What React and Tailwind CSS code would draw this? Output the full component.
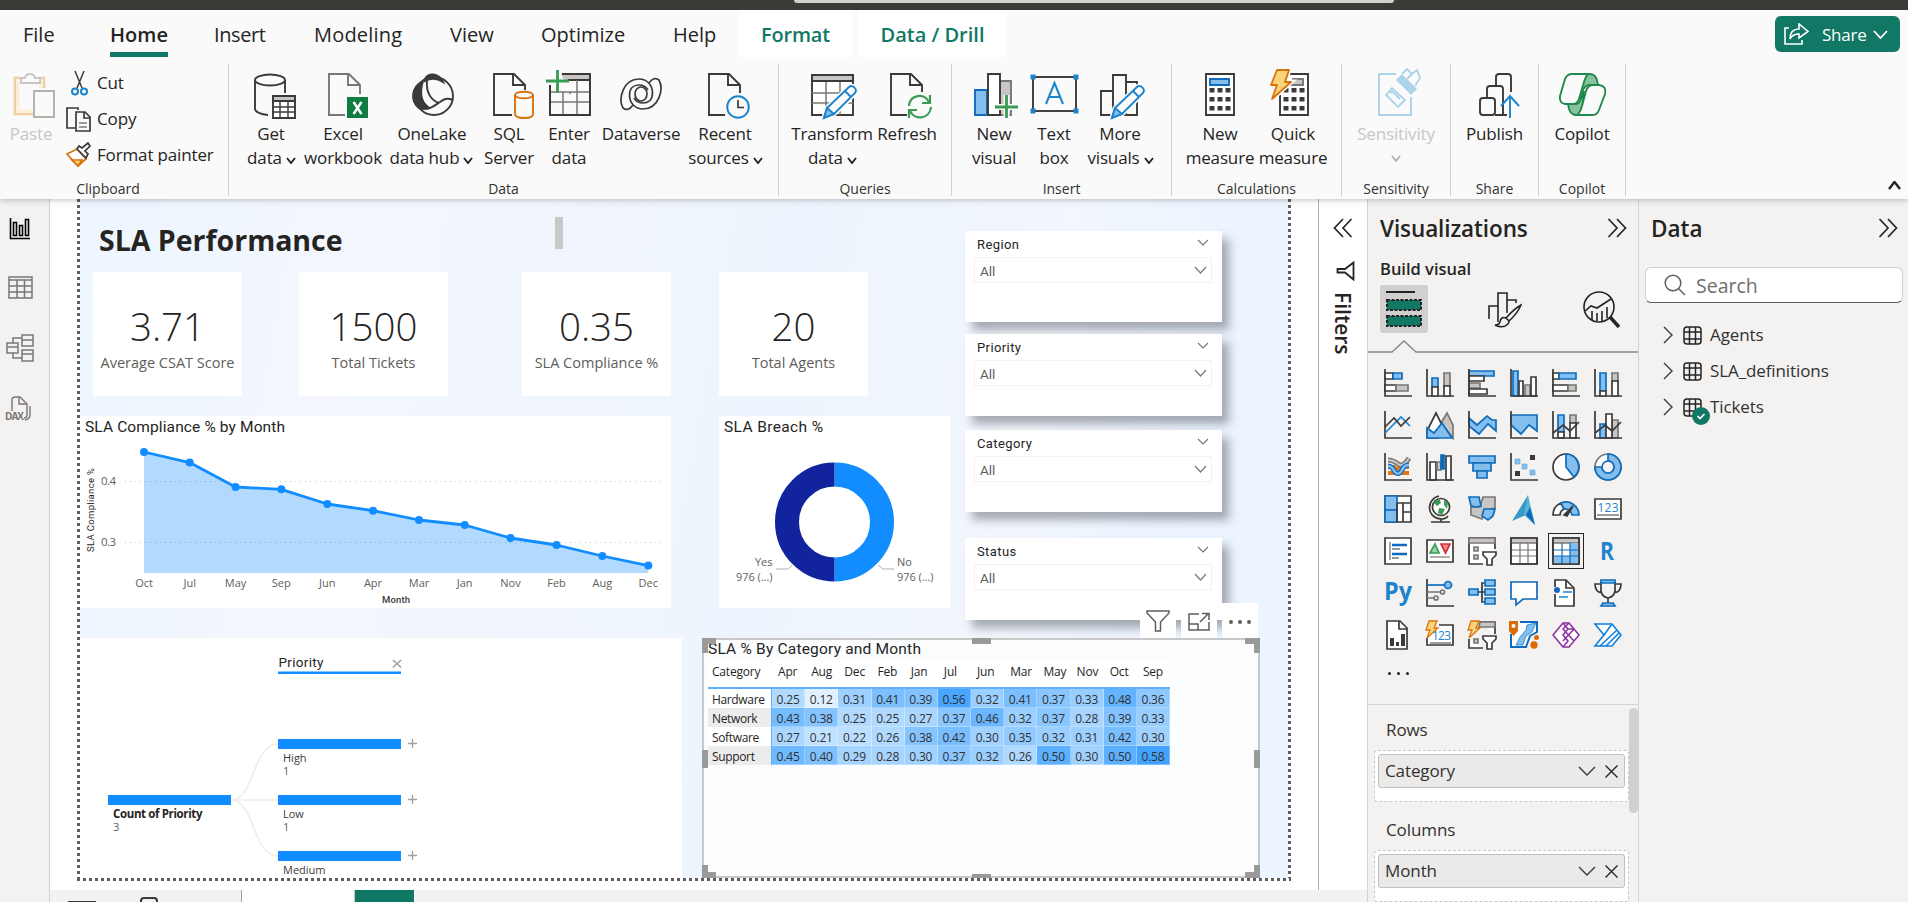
import React from "react";

const INK = "#3b3a39";
const GREEN = "#3a9b54";
const BLUE = "#1c84cc";
const SKY = "#83beec";
const DEEP = "#0f6cbd";
const MID = "#c8c6c4";
const GR = "#797775";

/* ---------- shared glyphs ---------- */
const Chev = ({ className = "", w = 10, h = 6, sw = 2 }) => (
  <svg className={className} width={w} height={h} viewBox={`0 0 ${w} ${h}`} fill="none" stroke="currentColor" strokeWidth={sw}>
    <path d={`M1 1L${w / 2} ${h - 1}L${w - 1} 1`} />
  </svg>
);

const Double = ({ left }) => (
  <svg width="20" height="22" viewBox="0 0 20 22" fill="none" stroke="#252423" strokeWidth="1.7" className={left ? "rotate-180" : ""}>
    <path d="M1.5 2L10 11L1.5 20M10 2L18.5 11L10 20" />
  </svg>
);

const Ico = ({ children }) => (
  <svg width="50" height="50" viewBox="0 0 50 50" fill="none" stroke={INK} strokeWidth="1.9" className="shrink-0 overflow-visible">
    {children}
  </svg>
);

const Doc = ({ x, cut, color = INK }) => (
  <g stroke={color}>
    <path d={cut} fill="#fafafa" />
    <path d={`M${x + 19} 5V16H${x + 31}`} />
  </g>
);
const docPath = (x, cutX, cutY) => `M${cutX} 46H${x}V5H${x + 20}L${x + 31} 16V${cutY}`;

const Pencil = () => (
  <g stroke={BLUE} fill="#fafafa">
    <path d="M17 49L20 39L42 18C45 15 51 20 48 24L27 45Z" stroke="#fafafa" strokeWidth="5" />
    <path d="M17 49L20 39L42 18C45 15 51 20 48 24L27 45Z" />
    <path d="M17 49L20 39L27 45Z" fill={SKY} />
    <path d="M38 22L44 28" />
  </g>
);

/* ---------- ribbon icons ---------- */
const GetData = () => (
  <Ico>
    <ellipse cx="24" cy="11" rx="15" ry="5.5" />
    <path d="M9 11V40C9 43 15 45.5 22 46M39 11V24" />
    <path d="M27 27H49V49H27Z" fill="#fff" />
    <path d="M27 27H49V32H27Z" fill={MID} />
    <path d="M27 38H49M27 43H49M34 32V49M42 32V49" strokeWidth="1.4" />
  </Ico>
);
const Excel = () => (
  <Ico>
    <Doc x={11} cut={docPath(11, 27, 25)} color="#797775" />
    <rect x="29" y="28" width="21" height="21" fill="#107c41" stroke="none" />
    <path d="M35.500 33L43.500 45M43.500 33L35.500 45" stroke="#fff" strokeWidth="2.4" />
  </Ico>
);
const OneLake = () => (
  <Ico>
    <circle cx="28" cy="27" r="19" />
    <path d="M19 10C22 4 32 3 37 13C31 9 25 9 19 12Z" fill={INK} />
    <path d="M17 12C5 18 4 32 13 39C18 40 20 40 22 38C14 32 14 22 17 12Z" fill={INK} />
    <path d="M21 12C20 22 24 31 33 34M13 39C24 42 29 36 34 33C39 29 42 29 47 31" />
  </Ico>
);
const Sql = () => (
  <Ico>
    <Doc x={10} cut={docPath(10, 28, 21)} />
    <g stroke="#d9730d">
      <path d="M31 26V45C31 47.500 35 49 40.500 49S49 47.500 49 45V26" fill="#fafafa" />
      <ellipse cx="40" cy="26" rx="9" ry="3.300" fill="#fafafa" />
    </g>
  </Ico>
);
const Enter = () => (
  <Ico>
    <path d="M17 5H46V11H20Z" fill={MID} stroke="none" />
    <path d="M18 5H46V46H6V16M24 11H46" />
    <path d="M6 23H46M6 33H46M19 23V46M33 11V46M26 23V25" stroke={GR} strokeWidth="1.500" />
    <path d="M6 46V16M46 5V46H6" />
    <path d="M2 12H25M13.500 1V24" stroke={GREEN} strokeWidth="2.800" />
  </Ico>
);
const Swirl = () => <path d="M17 36Q12 43 7 39C2 30 7 10 23 10C31 10 36.500 16 36.500 24C36.500 31 32 34 27 34Q21 34 18 29" />;
const Dataverse = () => (
  <Ico>
    <g strokeWidth="1.700">
      <Swirl />
      <g transform="rotate(180 25 25)">
        <Swirl />
      </g>
      <ellipse cx="25" cy="25" rx="6" ry="7" />
    </g>
  </Ico>
);
const Recent = () => (
  <Ico>
    <Doc x={9} cut={docPath(9, 25, 24)} />
    <circle cx="38" cy="38" r="10.800" stroke={BLUE} fill="#fafafa" />
    <path d="M38 31V38.500H44" strokeWidth="1.700" />
  </Ico>
);
const Transform = () => (
  <Ico>
    <path d="M5 6H46V46H5Z" fill="#fff" />
    <path d="M5 24H46M5 34H46M19 12V46M33 12V46" stroke={GR} strokeWidth="1.500" />
    <path d="M5 6H46V12H5Z" fill={MID} />
    <Pencil />
  </Ico>
);
const Refresh = () => (
  <Ico>
    <Doc x={10} cut={docPath(10, 26, 23)} />
    <g stroke={GREEN} strokeWidth="2.200">
      <path d="M28 37C29 25 43 24 48 33M49 26V34H41M50 38C49 50 34 52 29 42M28 49V41H36" />
    </g>
  </Ico>
);
const NewVisual = () => (
  <Ico>
    <path d="M6 21H18V46H6Z" fill={SKY} stroke={DEEP} />
    <path d="M31 12H42V46H31Z" fill={MID} stroke={GR} />
    <path d="M19 5H31V46H19Z" fill="#fff" />
    <path d="M26 38H49M37.500 26V49" stroke="#fafafa" strokeWidth="6" />
    <path d="M26 38H49M37.500 26V49" stroke={GREEN} strokeWidth="2.800" />
  </Ico>
);
const TextBox = () => (
  <Ico>
    <rect x="4" y="8" width="43" height="34" />
    <path d="M17 35L25.500 14L34 35M20 28H31" stroke={BLUE} strokeWidth="2" />
    <g fill={BLUE} stroke="none">
      <rect x="1.500" y="5.500" width="5" height="5" />
      <rect x="44.500" y="5.500" width="5" height="5" />
      <rect x="1.500" y="39.500" width="5" height="5" />
      <rect x="44.500" y="39.500" width="5" height="5" />
    </g>
  </Ico>
);
const MoreVisuals = () => (
  <Ico>
    <path d="M6 22H18V46H6ZM31 13H42V46H31ZM18 6H31V46H18Z" />
    <Pencil />
  </Ico>
);
const Keys = ({ x }) => (
  <g fill={INK} stroke="none">
    {[20, 29, 38].map((y) => [0, 8, 16].map((d) => <rect key={`${y}-${d}`} x={x + d} y={y - 1} width="5" height="4.500" />))}
  </g>
);
const NewMeasure = () => (
  <Ico>
    <path d="M11 5H39V46H11Z" fill="#fff" />
    <path d="M15 10H34V16H15Z" fill={SKY} stroke={DEEP} />
    <Keys x={14.500} />
  </Ico>
);
const QuickMeasure = () => (
  <Ico>
    <path d="M20 5H40V46H12V26" fill="#fff" />
    <path d="M24 10H35V16H20" fill={MID} stroke={GR} />
    <Keys x={15.500} />
    <path d="M9 1H21L17 13H23L4 30L9 16H3Z" fill="#fafafa" stroke="#fafafa" strokeWidth="5" />
    <path d="M9 1H21L17 13H23L4 30L9 16H3Z" fill="#fbd37a" stroke="#d9730d" strokeWidth="1.800" strokeLinejoin="round" />
  </Ico>
);
const Sensitivity = () => (
  <Ico>
    <g stroke="#abd3ea">
      <path d="M25 5H8V46H40V28" />
      <path d="M15 26L21 19L34 31L27 38Z" fill="#fafafa" />
      <path d="M19 24L21 22L29 30" />
      <path d="M25 11L31 5L46 20L40 26Z" fill="#abd3ea" stroke="none" />
      <path d="M31 5L36 0L41 5L46 1L49 9L44 17" fill="#fafafa" />
      <path d="M36 10L41 5" />
    </g>
  </Ico>
);
const Publish = () => (
  <Ico>
    <path d="M41 24V8Q41 5 38 5H29Q26 5 26 8V17M33 46V20Q33 17 30 17H20Q17 17 17 20V29M25 46H37" />
    <rect x="10" y="29" width="15" height="17" rx="3" />
    <path d="M40 23V49" stroke="#fafafa" strokeWidth="5" />
    <path d="M40 49V27M31 37L40 27L49 37" stroke={BLUE} />
  </Ico>
);
const Copilot = () => (
  <Ico>
    <g stroke="#1f8a4c" strokeWidth="1.900">
      <path d="M26 5H33Q38 5 40 11L41 16H33Q28 16 26 21L23 30Z" fill="#86c29f" />
      <path d="M11 35H19Q22 35 24 30L27 22L25 46H19Q14 46 12 40Z" fill="#86c29f" />
      <path d="M15 5H31Q29 7 27 13L22 30Q20 35 16 35H8Q2 34 3 27L8 10Q10 5 15 5Z" fill="#fafafa" />
      <path d="M36 16H42Q50 17 48 25L42 41Q40 46 36 46H20Q23 44 25 37L29 22Q31 16 36 16Z" fill="#fafafa" />
    </g>
  </Ico>
);

/* ---------- ribbon ---------- */
const Btn = ({ w, icon, a, b, more, dim }) => (
  <div className={`flex flex-col items-center pt-3 text-[17px] leading-6 tracking-[-0.15px] whitespace-nowrap ${w} ${dim ? "text-[#c8c6c4]" : "text-[#252423]"}`}>
    {icon}
    <span className="mt-[3px]">{a}</span>
    <div className="flex h-6 items-center gap-1">
      {b}
      {more && <Chev className={dim ? "text-[#b3b0ad]" : "mt-1 -mr-px text-[#252423]"} w={10} h={7} sw={1.900} />}
    </div>
  </div>
);
const Group = ({ w, name, children, className = "" }) => (
  <div className={`flex h-[142px] shrink-0 flex-col ${w}`}>
    <div className="mt-[7px] flex h-[132px] flex-col border-r border-[#d2d0ce]">
      <div className={`-mt-[7px] flex h-[122px] shrink-0 ${className}`}>{children}</div>
      <div className="text-center text-[14px] leading-5 text-[#323130]">{name}</div>
    </div>
  </div>
);

const Tab = ({ w, children }) => <div className={`flex h-[49px] items-center ${w}`}>{children}</div>;

const Header = () => (
  <header className="relative z-10 flex h-[199px] shrink-0 flex-col bg-[#fafafa] shadow-[0_1px_6px_rgba(0,0,0,0.25)]">
    <div className="flex h-[10px] shrink-0 bg-[#3b3a36] pl-[794px]">
      <div className="h-[3px] w-[600px] rounded-b bg-[#d2d0ce]" />
    </div>
    <div className="flex h-[47px] shrink-0 pl-[23px] text-[20px] text-[#252423]">
      <Tab w="w-[87px]">File</Tab>
      <div className="mr-[46px] flex h-[47px] w-[58px] flex-col items-center border-b-[5px] border-[#117865] pt-[10px] leading-[30px] font-semibold">Home</div>
      <Tab w="w-[100px] tracking-[-0.4px]">Insert</Tab>
      <Tab w="w-[136px] tracking-[0.2px]">Modeling</Tab>
      <Tab w="w-[91px]">View</Tab>
      <Tab w="w-[132px]">Optimize</Tab>
      <Tab w="w-[66px]">Help</Tab>
      <div className="mr-[6px] flex h-[47px] w-[113px] items-center justify-center bg-white pt-[2px] font-semibold tracking-[-0.2px] text-[#117865]">Format</div>
      <div className="flex h-[47px] w-[149px] items-center justify-center bg-white pt-[2px] font-semibold text-[#117865]">Data / Drill</div>
      <div className="mt-[6px] mr-2 ml-auto flex h-9 w-[125px] items-center rounded-md bg-[#117865] pl-[9px] text-[17px] text-white">
        <svg width="25" height="22" viewBox="0 0 25 22" fill="none" stroke="#fff" strokeWidth="1.600">
          <path d="M5 5H1V21H18V17M6 16C6 9 10 6 15 6V1L24 8.500L15 15V11C11 11 8 12 6 16Z" />
        </svg>
        <span className="mt-px ml-[13px] tracking-[-0.2px]">Share</span>
        <Chev className="ml-[6px]" w={15} h={9} sw={1.800} />
      </div>
    </div>
    <div className="flex h-[142px]">
      <Group w="w-[229px]" name={<span className="-ml-3">Clipboard</span>} className="pl-[5px]">
        <div className="flex w-[52px] flex-col items-center pt-3 text-[17px] leading-6 tracking-[-0.15px] text-[#c8c6c4]">
          <svg width="50" height="50" viewBox="0 0 50 50" fill="none" strokeWidth="1.900">
            <path d="M14 9H9V45H28M33 9H38V19" stroke="#f0cfa6" strokeWidth="2.500" />
            <path d="M12 12V42H27M35 12V20" stroke="#fbf0d5" strokeWidth="3" />
            <path d="M15 14V9H19Q20 5 24 5T29 9H34V14Z" stroke="#c8c6c4" />
            <path d="M28 22H48V48H28Z" stroke="#b3b0ad" fill="#fafafa" />
          </svg>
          <span className="mt-[3px]">Paste</span>
        </div>
        <div className="ml-[9px] flex flex-col pt-2 text-[17px] tracking-[-0.15px] text-[#252423]">
          <div className="flex h-9 items-center gap-[6px]">
            <svg width="25" height="26" viewBox="0 0 25 26" fill="none" stroke={INK} strokeWidth="1.500">
              <path d="M9 1L16 18M18 1L11 18" />
              <circle cx="9" cy="21.500" r="3" stroke={BLUE} strokeWidth="2" />
              <circle cx="18" cy="21.500" r="3" stroke={BLUE} strokeWidth="2" />
            </svg>
            Cut
          </div>
          <div className="flex h-9 items-center gap-[6px]">
            <svg width="25" height="26" viewBox="0 0 25 26" fill="none" stroke={INK} strokeWidth="1.700">
              <path d="M12 4V2H1V22H9M10 6H19L24 11V25H10ZM18 6V12H24" />
              <path d="M13 17H21M13 21H21" strokeWidth="1.200" />
            </svg>
            Copy
          </div>
          <div className="flex h-9 items-center gap-[6px]">
            <svg width="25" height="26" viewBox="0 0 25 26" fill="none" stroke={INK} strokeWidth="1.700">
              <path d="M1 12L11 7L20 17L12 24Z" fill="#fff" stroke="#d9730d" />
              <path d="M6 18L16 18L12 24Z" fill="#fbd37a" stroke="#d9730d" />
              <path d="M11 7L20 16L22 12L19 9L24 4L22 1L16 6L13 4Z" fill="#fafafa" />
            </svg>
            Format painter
          </div>
        </div>
      </Group>
      <Group w="w-[550px]" name="Data" className="pl-[11px]">
        <Btn w="w-[62px]" icon={<GetData />} a="Get" b="data" more />
        <Btn w="w-[82px]" icon={<Excel />} a="Excel" b="workbook" />
        <Btn w="w-[94px]" icon={<OneLake />} a={<span className="pl-[2px]">OneLake</span>} b="data hub" more />
        <Btn w="w-[62px]" icon={<Sql />} a="SQL" b="Server" />
        <Btn w="w-[58px]" icon={<Enter />} a="Enter" b="data" />
        <Btn w="w-[86px]" icon={<Dataverse />} a="Dataverse" />
        <Btn w="w-[82px]" icon={<Recent />} a="Recent" b="sources" more />
      </Group>
      <Group w="w-[173px]" name="Queries" className="pl-[9px]">
        <Btn w="w-[88px]" icon={<Transform />} a="Transform" b="data" more />
        <Btn w="w-[60px]" icon={<Refresh />} a={<span className="pl-[2px]">Refresh</span>} />
      </Group>
      <Group w="w-[220px]" name="Insert" className="pl-3">
        <Btn w="w-[60px]" icon={<NewVisual />} a="New" b="visual" />
        <Btn w="w-[60px]" icon={<TextBox />} a="Text" b="box" />
        <Btn w="w-[72px]" icon={<MoreVisuals />} a="More" b="visuals" more />
      </Group>
      <Group w="w-[170px]" name="Calculations" className="pl-3">
        <Btn w="w-[72px]" icon={<NewMeasure />} a="New" b="measure" />
        <Btn w="w-[74px]" icon={<QuickMeasure />} a="Quick" b="measure" />
      </Group>
      <Group w="w-[109px]" name="Sensitivity" className="justify-center">
        <Btn w="w-[90px]" icon={<Sensitivity />} a="Sensitivity" more dim />
      </Group>
      <Group w="w-[88px]" name="Share" className="justify-center">
        <Btn w="w-[70px]" icon={<Publish />} a="Publish" />
      </Group>
      <Group w="w-[87px]" name="Copilot" className="justify-center">
        <Btn w="w-[70px]" icon={<Copilot />} a="Copilot" />
      </Group>
      <Chev className="mt-[124px] mr-[7px] ml-auto rotate-180 text-[#252423]" w={13} h={9} sw={2.400} />
    </div>
  </header>
);

/* ---------- left rail ---------- */
const Rail = () => (
  <nav className="flex w-[50px] shrink-0 flex-col border-r border-[#d2d0ce] bg-[#f3f2f1] pt-[19px] pl-[5px]">
    <svg width="30" height="22" viewBox="0 0 30 22" fill="none" stroke="#000" strokeWidth="1.600">
      <path d="M5.500 0V20.500H25M8.500 4.500H11.500V17.500H8.500ZM14.500 7.500H17.500V17.500H14.500ZM20.500 1.500H23.500V17.500H20.500Z" />
    </svg>
    <svg className="mt-[36px]" width="30" height="24" viewBox="0 0 30 24" fill="none" stroke={GR} strokeWidth="1.500">
      <path d="M4 1H27V22H4ZM4 4H27M4 10H27M4 16H27M12 4V22M19.500 4V22" />
    </svg>
    <svg className="mt-[34px]" width="30" height="28" viewBox="0 0 30 28" fill="none" stroke={GR} strokeWidth="1.500">
      <path d="M2 9H13V19H2ZM2 13H13M17 1H28V12H17ZM17 6H28M17 16H28V27H17ZM17 20H28M8 9V4H17M8 19V24H17" />
    </svg>
    <svg className="mt-[34px]" width="30" height="26" viewBox="0 0 30 26" fill="none" stroke={GR} strokeWidth="1.400">
      <path d="M7 15V4Q7 1 10 1H15L22 8V19Q22 22 19 22M14 1V8H22M25 10V19Q25 23 20 24" />
      <text x="0" y="24" fontSize="10" fontWeight="700" fill={GR} stroke="none" textLength="19">DAX</text>
    </svg>
  </nav>
);

/* ---------- report visuals ---------- */
const Card = ({ value, label, className }) => (
  <div className={`flex h-[124px] w-[149px] shrink-0 flex-col items-center bg-white pt-[28px] whitespace-nowrap ${className}`}>
    <div className="text-[38.500px] leading-[52px] font-[350] text-[#252423]">{value}</div>
    <div className="mt-px text-[14.500px] leading-5 text-[#605e5c]">{label}</div>
  </div>
);

const POINTS = [
  ["Oct", 64, 36], ["Jul", 109.700, 46.600], ["May", 155.500, 71], ["Sep", 201.300, 73.300],
  ["Jun", 247.300, 88], ["Apr", 293, 94.700], ["Mar", 339, 104], ["Jan", 384.700, 109],
  ["Nov", 430.500, 122], ["Feb", 476.500, 129], ["Aug", 522.300, 140], ["Dec", 568.300, 149.600],
];
const line = POINTS.map((p) => `${p[1]},${p[2]}`).join(" ");

const AreaChart = () => (
  <svg width="591" height="192" viewBox="0 0 591 192" className="shrink-0 bg-white">
    <text x="5" y="16" className="font-[Roboto]" fontSize="15.500" fill="#252423" textLength="200">SLA Compliance % by Month</text>
    <polygon points={`64,157 ${line} 568.300,157`} fill="#118dff" fillOpacity="0.32" />
    <path d="M45 65.500H584M45 126.500H584" stroke="#000" strokeOpacity="0.22" strokeDasharray="1 4" />
    <polyline points={line} fill="none" stroke="#118dff" strokeWidth="2.800" strokeLinejoin="round" />
    {POINTS.map(([m, x, y]) => (
      <g key={m}>
        <circle cx={x} cy={y} r="4" fill="#118dff" />
        <text x={x} y="171" fontSize="11" textAnchor="middle" fill="#605e5c">{m}</text>
      </g>
    ))}
    <g fontSize="11.500" fill="#605e5c">
      <text x="21" y="69" textLength="15">0.4</text>
      <text x="21" y="130" textLength="15">0.3</text>
    </g>
    <text x="302" y="187" className="font-[Roboto]" fontSize="9.500" fontWeight="500" fill="#3b3a39" textLength="28">Month</text>
    <text transform="translate(14 136) rotate(-90)" className="font-[Roboto]" fontSize="9.500" fill="#252423" textLength="84">SLA Compliance %</text>
  </svg>
);

const Donut = () => (
  <svg width="231" height="192" viewBox="0 0 231 192" className="ml-[48px] shrink-0 bg-white">
    <text x="5" y="16" className="font-[Roboto]" fontSize="15.500" fill="#252423" textLength="99">SLA Breach %</text>
    <path d="M115.500 58.500A47.500 47.500 0 0 1 115.500 153.500" fill="none" stroke="#118dff" strokeWidth="24" />
    <path d="M115.500 153.500A47.500 47.500 0 0 1 115.500 58.500" fill="none" stroke="#12239e" strokeWidth="24" />
    <path d="M57 153H69L73 149M175 153H164L159 149" fill="none" stroke="#b3b0ad" />
    <g fontSize="11" fill="#605e5c">
      <text x="53.500" y="150" textAnchor="end">Yes</text>
      <text x="17" y="165" textLength="36.500">976 (...)</text>
      <text x="178" y="150">No</text>
      <text x="178" y="165" textLength="36.500">976 (...)</text>
    </g>
  </svg>
);

const Slicer = ({ name, h }) => (
  <div className={`w-[257px] shrink-0 bg-white pl-[9px] font-[Roboto] shadow-[7px_8px_9px_rgba(60,65,75,0.42)] ${h}`}>
    <div className="flex h-[26px] items-center pt-px pl-[3px] text-[13px] tracking-[0.4px] text-[#252423]">
      {name}
      <Chev className="mt-[-4px] mr-[13px] ml-auto text-[#797775]" w={12} h={7} sw={1.200} />
    </div>
    <div className="flex h-[26px] w-[238px] items-center border border-[#f3f2f1] pt-[3px] pl-[5px] text-[13.500px] text-[#605e5c]">
      All
      <Chev className="mt-[-3px] mr-1 ml-auto text-[#797775]" w={13} h={8} sw={1.200} />
    </div>
  </div>
);

const Tree = () => (
  <svg width="602" height="240" viewBox="0 0 602 240" className="shrink-0 bg-white">
    <text x="198.500" y="29" className="font-[Roboto]" fontSize="13.500" fill="#252423" textLength="45">Priority</text>
    <path d="M313 22L321 29.500M321 22L313 29.500" stroke="#a19f9d" strokeWidth="1.500" />
    <rect x="198" y="33.500" width="123" height="2.500" fill="#118dff" />
    <path d="M151 162C175 162 172 106 198 106M151 162H198M151 162C175 162 172 218 198 218" fill="none" stroke="#edebe9" strokeWidth="1.300" />
    <rect x="28" y="157" width="123" height="10" fill="#118dff" />
    <text x="33" y="180" fontSize="11.500" fontWeight="700" fill="#252423" textLength="89.500">Count of Priority</text>
    <text x="33" y="193" fontSize="11" fill="#605e5c">3</text>
    {[["High", 101], ["Low", 157], ["Medium", 213]].map(([t, y]) => (
      <g key={t}>
        <rect x="198" y={y} width="123" height="10" fill="#118dff" />
        <path d={`M328 ${y + 4.500}H337M332.500 ${y}V${y + 9}`} stroke="#a19f9d" strokeWidth="1.300" />
        <text x="203" y={y + 23} fontSize="11" fill="#3b3a39">{t}</text>
        {t !== "Medium" && <text x="203" y={y + 36} fontSize="11" fill="#605e5c">1</text>}
      </g>
    ))}
  </svg>
);

const MONTHS = ["Apr", "Aug", "Dec", "Feb", "Jan", "Jul", "Jun", "Mar", "May", "Nov", "Oct", "Sep"];
const ROWS = [
  ["Hardware", [0.25, 0.12, 0.31, 0.41, 0.39, 0.56, 0.32, 0.41, 0.37, 0.33, 0.48, 0.36]],
  ["Network", [0.43, 0.38, 0.25, 0.25, 0.27, 0.37, 0.46, 0.32, 0.37, 0.28, 0.39, 0.33]],
  ["Software", [0.27, 0.21, 0.22, 0.26, 0.38, 0.42, 0.3, 0.35, 0.32, 0.31, 0.42, 0.3]],
  ["Support", [0.45, 0.4, 0.29, 0.28, 0.3, 0.37, 0.32, 0.26, 0.5, 0.3, 0.5, 0.58]],
];
const shade = (v) => {
  const t = (v - 0.12) / 0.46;
  return `rgb(${Math.round(223 - 158 * t)}, ${Math.round(240 - 77 * t)}, 255)`;
};

const Matrix = () => (
  <div className="relative ml-5 w-[558px] shrink-0 border-2 border-[#c8c8c8] bg-white/80 pl-1">
    <div className="font-[Roboto] text-[15.500px] leading-[19px] tracking-[0.200px] text-[#252423]">SLA % By Category and Month</div>
    <div className="mt-[2px] w-[462px] text-[12px] tracking-[-0.200px] text-[#252423]">
      <div className="flex h-[28px] border-b-2 border-[#5fb2fa] bg-white leading-[22px]">
        <div className="w-[64px] pl-1">Category</div>
        {MONTHS.map((m) => (
          <div key={m} className="flex-1 pl-[6px]">{m}</div>
        ))}
      </div>
      {ROWS.map(([name, vals], i) => (
        <div key={name} className="flex h-[19px] leading-[21px]">
          <div className={`w-[64px] border-r border-[#5fb2fa] pl-1 tracking-[-0.350px] ${i % 2 ? "bg-[#ececec]" : "bg-white"}`}>{name}</div>
          {vals.map((v, j) => (
            <div key={j} className="flex-1 border-r border-b border-white/30 text-center text-[#323130]" style={{ backgroundColor: shade(v) }}>
              {v.toFixed(2)}
            </div>
          ))}
        </div>
      ))}
    </div>
    <svg className="absolute -top-[2px] -left-[2px]" width="558" height="240" viewBox="0 0 558 240" fill="#9a9a9a">
      <path d="M0 0H14V6H6V15H0ZM558 0H543V6H552V15H558ZM0 240H14V234H6V227H0ZM558 240H543V234H552V227H558ZM270 0H289V6H270ZM270 236H289V240H270ZM0 112H6V130H0ZM552 112H558V130H552Z" />
    </svg>
    <div className="absolute -top-[37px] right-0 flex gap-[5px] text-[#605e5c]">
      <div className="flex h-[35px] w-9 items-center justify-center bg-white">
        <svg width="24" height="22" viewBox="0 0 24 22" fill="none" stroke="currentColor" strokeWidth="1.500">
          <path d="M1 1H23V3L14.500 12V21H9.500V12L1 3Z" />
        </svg>
      </div>
      <div className="flex h-[35px] w-9 items-center justify-center bg-white pt-[3px]">
        <svg width="22" height="20" viewBox="0 0 22 20" fill="none" stroke="currentColor" strokeWidth="1.500">
          <path d="M11 2H1V18H21V10M1 12H10V18M12 10L20 2M14 1.500H21V8" />
        </svg>
      </div>
      <div className="flex h-[35px] w-9 items-center justify-center gap-[5px] bg-white pt-[2px]">
        <i className="h-1 w-1 rounded-full bg-[#605e5c]" />
        <i className="h-1 w-1 rounded-full bg-[#605e5c]" />
        <i className="h-1 w-1 rounded-full bg-[#605e5c]" />
      </div>
    </div>
  </div>
);

const DotsV = () => <div className="w-[3px] shrink-0 bg-[repeating-linear-gradient(to_bottom,#605e5c_0_3px,transparent_3px_6px)]" />;

const Report = () => (
  <main className="flex min-w-0 flex-1 flex-col bg-white">
    <div className="flex h-[679px] pl-[27px]">
      <DotsV />
      <div className="flex w-[1208px] shrink-0 flex-col bg-[linear-gradient(100deg,#edf5ff_0%,#f3f7fd_20%,#eef4fd_55%,#f2f7fd_75%,#ecf4ff_88%)]">
        <div className="flex h-[439px] shrink-0">
          <div className="w-[885px] shrink-0">
            <div className="flex h-[73px] pl-[19px]">
              <h1 className="w-[456px] pt-[21px] text-[28.500px] leading-10 font-bold text-[#252423]">SLA Performance</h1>
              <div className="mt-[18px] h-8 w-2 bg-[#c8c8c8]" />
            </div>
            <div className="flex pl-[13px]">
              <Card value="3.71" label="Average CSAT Score" />
              <Card value="1500" label="Total Tickets" className="ml-[57px]" />
              <Card value="0.35" label="SLA Compliance %" className="ml-[74px]" />
              <Card value="20" label="Total Agents" className="ml-[48px]" />
            </div>
            <div className="mt-5 flex">
              <AreaChart />
              <Donut />
            </div>
          </div>
          <div className="flex flex-col pt-[32px]">
            <Slicer name="Region" h="h-[91px]" />
            <div className="h-3" />
            <Slicer name="Priority" h="h-[82px]" />
            <div className="h-[14px]" />
            <Slicer name="Category" h="h-[82px]" />
            <div className="h-[26px]" />
            <Slicer name="Status" h="h-[82px]" />
          </div>
        </div>
        <div className="flex h-[240px]">
          <Tree />
          <Matrix />
        </div>
      </div>
      <DotsV />
    </div>
    <div className="ml-[27px] h-[3px] w-[1214px] shrink-0 bg-[repeating-linear-gradient(to_right,#605e5c_0_3px,transparent_3px_6px)]" />
  </main>
);

/* ---------- right panes ---------- */
const Filters = () => (
  <aside className="flex w-[49px] shrink-0 flex-col items-center border-l border-[#b3b0ad] bg-white pt-[18px]">
    <Double left />
    <svg className="mt-[22px] ml-1" width="19" height="20" viewBox="0 0 19 20" fill="none" stroke="#252423" strokeWidth="1.800">
      <path d="M17.500 1.500V18.500L9 11.500H1.500V8H9Z" />
    </svg>
    <div className="mt-[11px] text-[21px] leading-7 font-semibold text-[#252423] [writing-mode:vertical-rl]">Filters</div>
  </aside>
);

const Axes = () => <path d="M1 0V27H28" />;
const B = (d) => <path d={d} fill={SKY} stroke={DEEP} />;
const G = (d) => <path d={d} fill={MID} stroke={GR} />;
const W = (d) => <path d={d} fill="#fff" />;
const Funnel = () => <path d="M15 15H28V18L24 22V28H19V22L15 18Z" fill="#fff" />;
const MiniBolt = () => <path d="M3 0H11L8 7H12L1 17L4 9H0Z" fill="#fbd37a" stroke="#d9730d" strokeWidth="1.300" />;

const GALLERY = [
  <><Axes />{W("M1 4H9V10H1Z")}{B("M9 4H18V10H9Z")}{W("M1 16H12V22H1Z")}{G("M12 16H24V22H12Z")}</>,
  <><Axes />{B("M6 9H12V18H6Z")}{W("M6 18H12V27H6Z")}{G("M18 4H24V17H18Z")}{W("M18 17H24V27H18Z")}</>,
  <>{B("M1 2H26V7H1Z")}{W("M1 7H16V12H1Z")}{G("M1 14H12V19H1Z")}{W("M1 20H19V25H1Z")}<Axes /></>,
  <>{B("M3 2H8V27H3Z")}{W("M9 12H13V27H9Z")}{G("M15 16H20V27H15Z")}{W("M21 8H26V27H21Z")}<Axes /></>,
  <><Axes />{W("M1 4H7V10H1Z")}{B("M7 4H24V10H7Z")}{W("M1 16H16V22H1Z")}{G("M16 16H24V22H16Z")}</>,
  <><Axes />{B("M6 4H12V22H6Z")}{W("M6 22H12V27H6Z")}{G("M18 4H24V12H18Z")}{W("M18 12H24V27H18Z")}</>,

  <><Axes /><path d="M1 22L17 6L26 15" stroke={BLUE} /><path d="M1 16L10 7L17 15L26 6" /></>,
  <>{G("M15 12L21 2L27 14V27Z")}{W("M1 20L10 2L19 20L12 27H1Z")}{B("M1 17L8 22L16 12L26 27H1Z")}</>,
  <>{B("M1 7L9 14L19 5L24 9H28V20L20 13L11 23L1 15Z")}<Axes /></>,
  <>{B("M1 4H27V20L19 14L11 23L1 14Z")}<Axes /></>,
  <>{B("M6 4H12V21H6Z")}{W("M6 21H12V27H6Z")}{G("M18 4H24V12H18Z")}{W("M18 12H24V27H18Z")}<path d="M1 22L11 14L18 20L27 11" /><Axes /></>,
  <>{B("M6 13H12V27H6Z")}{G("M18 9H24V27H18Z")}{W("M12 3H18V27H12Z")}<path d="M1 22L11 14L18 20L27 11" /><Axes /></>,

  <><path d="M4 14L10 14L16 20L25 20M4 20H10L16 14H25" stroke="#e07a10" strokeWidth="4" /><path d="M4 7Q9 7 14 11T25 5" stroke={GR} strokeWidth="5" /><path d="M4 7Q9 7 14 11T25 5" stroke={MID} strokeWidth="2" /><path d="M4 13Q8 13 11 19Q15 23 18 17Q20 12 25 12" stroke={DEEP} strokeWidth="5" /><path d="M4 13Q8 13 11 19Q15 23 18 17Q20 12 25 12" stroke={SKY} strokeWidth="2.400" /><Axes /></>,
  <>{W("M4 9H10V27H4Z")}{G("M11 9H15V17H11Z")}<path d="M15 2H18V16H15Z" fill={DEEP} stroke={DEEP} />{W("M20 3H25V27H20Z")}<Axes /></>,
  <>{B("M1 3H27V10H1Z")}{B("M5 10H23V18H5Z")}{B("M9 18H19V25H9Z")}</>,
  <><Axes /><g stroke="none"><path d="M20 2H25V7H20ZM5 18H10V23H5Z" fill={INK} /><path d="M5 6H10V11H5ZM12 11H17V16H12ZM20 17H25V22H20Z" fill={SKY} stroke="#5ba5dc" strokeWidth="0.600" /></g></>,
  <><circle cx="14" cy="14" r="13" fill="#fff" />{B("M14 14V1A13 13 0 0 1 22 24Z")}</>,
  <><circle cx="14" cy="14" r="13" fill="#fff" stroke={GR} />{B("M14 1A13 13 0 1 1 1 14H8A6 6 0 1 0 14 8Z")}<circle cx="14" cy="14" r="6" fill="#f3f2f1" stroke={DEEP} /></>,

  <>{W("M1 1H27V27H1Z")}{B("M1 1H13V15H1Z")}{B("M1 15H13V27H1Z")}<path d="M13 8H27M19 8V27M13 8V27M19 17H27" /></>,
  <><circle cx="15" cy="12" r="8.500" fill="#fff" /><path d="M8 8Q11 3 14 5L15 8L11 11ZM13 13L19 14L16 20L12 18ZM18 5L22 8L21 14L18 10Z" fill="#3a9b54" stroke="none" /><path d="M13 1C0 4 0 23 15 24Q20 24 22 21M15 24V27M5 27H24" /></>,
  <>{G("M12 12L15 2H27V13L18 15L14 24L3 20V12Z")}{B("M1 2H11L13 11L8 12L3 11Z")}{B("M16 14H27L25 21L20 25L14 21Z")}</>,
  <g stroke="none"><path d="M18 0L2 26L16 20Z" fill="#3999c8" /><path d="M18 0L25 30L14 20Z" fill="#57b3d8" /><path d="M16 20L25 30L20 12Z" fill="#0f6cbd" /></g>,
  <>{W("M1 20A13 13 0 0 1 9 8L12 14A7 7 0 0 0 8 20Z")}{B("M9 8A13 13 0 0 1 27 20H20A7 7 0 0 0 12 14Z")}<path d="M12 20L21 11L15 21Z" fill={INK} /></>,
  <><path d="M1 4H27V24H1Z" fill="#fff" /><text x="3.500" y="17" fontSize="12" fill={BLUE} stroke="none" textLength="21">123</text><path d="M3 20H25" strokeWidth="1" /></>,

  <><path d="M1 1H27V27H1Z" fill="#fff" /><path d="M6 5V23" stroke={GR} strokeWidth="1.300" /><path d="M8 8H23M8 17H23" stroke={DEEP} strokeWidth="2.500" /><path d="M8 12H16M8 21H15" stroke={GR} strokeWidth="1.300" /></>,
  <><path d="M1 3H27V25H1Z" fill="#fff" /><path d="M4 16L9 7L13 16Z" fill="#9fd0ab" stroke={GREEN} /><path d="M15 7H24L19.500 16Z" fill="#f0868b" stroke="#d13438" /><path d="M4 20H24" stroke={GR} strokeWidth="1.200" /></>,
  <><path d="M15 27H1V1H27V12" fill="#fff" />{G("M1 1H27V6H1Z")}{G("M6 10H10V14H6ZM6 18H10V22H6Z")}<Funnel /></>,
  <><path d="M1 1H27V27H1Z" fill="#fff" />{G("M1 1H27V6H1Z")}<path d="M1 13H27M1 19H27M10 6V27M18 6V27" stroke={GR} strokeWidth="1.200" /><path d="M1 1H27V27H1Z" /></>,
  <><path d="M1 1H27V27H1Z" fill="#fff" />{G("M1 1H27V6H1Z")}<path d="M18 6H27V27H1V19H18Z" fill={SKY} stroke="none" /><path d="M1 13H27M1 19H27M10 6V27M18 6V27" stroke={DEEP} strokeWidth="1.200" /><path d="M1 1H27V27H1Z" /></>,
  <text x="6" y="23" fontSize="25" fontWeight="700" fill={BLUE} stroke="none" textLength="14" lengthAdjust="spacingAndGlyphs">R</text>,

  <text x="0" y="21" fontSize="25" fontWeight="700" fill={BLUE} stroke="none" textLength="28" lengthAdjust="spacingAndGlyphs">Py</text>,
  <><Axes /><path d="M1 6H18" stroke={DEEP} /><circle cx="22" cy="6" r="3.500" fill={SKY} stroke={DEEP} /><path d="M1 13H14M1 19H8" stroke={GR} /><circle cx="16.500" cy="13" r="2" stroke={GR} /><circle cx="10" cy="19" r="2" stroke={GR} /></>,
  <><path d="M10 13H17M17 4H14V23H17" />{B("M1 10H10V16H1Z")}{B("M17 1H27V7H17Z")}{B("M17 10H27V16H17Z")}{B("M17 19H27V25H17Z")}</>,
  <path d="M1 3H27V20H13L6 26V20H1Z" fill="#fff" stroke={DEEP} />,
  <><path d="M3 8V1H14L22 9V27H3V15" fill="#fff" /><path d="M14 1V9H22" /><circle cx="5" cy="11" r="3" fill={DEEP} stroke="none" /><path d="M11 13H20M7 18H16" stroke={BLUE} strokeWidth="1.300" /></>,
  <><path d="M7 3V12Q8 18 14 19Q20 18 21 12V3ZM14 19V24M7 5H1Q1 13 8 14M21 5H27Q27 13 20 14" />{B("M7 1H21V4H7Z")}{B("M9 24H19L21 27H7Z")}</>,

  <><path d="M3 0H16L23 7V28H3Z" fill="#fff" /><path d="M15 0V8H23" /><path d="M6 17H10V25H6ZM12 21H15V25H12ZM17 13H21V25H17Z" fill={INK} stroke="none" /></>,
  <><path d="M13 4H27V24H1V17" fill="#fff" /><text x="6" y="19" fontSize="12" fill={BLUE} stroke="none" textLength="19">123</text><path d="M4 22H25" strokeWidth="1" /><MiniBolt /></>,
  <><path d="M15 27H1V18M12 1H27V13" fill="#fff" />{G("M12 1H27V6H11Z")}{G("M6 18H10V22H6Z")}<Funnel /><MiniBolt /></>,
  <><path d="M10 1H27V11L20 15L16 26H1V13" fill="#fff" stroke={DEEP} strokeWidth="2" /><path d="M17 4L26 2L22 11L16 15L13 24H6L10 16L16 9Z" fill={SKY} stroke={BLUE} strokeWidth="0.800" /><path d="M-1 0H8V10L3.500 15L-1 10Z" fill="#d96a05" stroke="none" /><circle cx="3.500" cy="5" r="2" fill="#fff" stroke="none" /><circle cx="24" cy="24" r="4.500" fill="#d96a05" stroke="#f3f2f1" /><circle cx="26.500" cy="16.500" r="2.500" fill="#d96a05" stroke="none" /></>,
  <g stroke="#8b2fa0" fill="#fff" strokeWidth="1.500"><path d="M1 14L11 2H17L27 14L17 26H11Z" /><path d="M11 2L16 8L11 14L16 20L11 26M17 2L11 8L22 20M16 8L22 8M22 8L11 20" fill="none" /></g>,
  <g stroke="#0f7fe0" fill="none" strokeWidth="1.600"><path d="M1 3H18L27 14L18 25H1L10 14Z" fill="#fff" /><path d="M10 14L18 3M6 25L23 9M12 25L25 12" /></g>,
];

const Chip = ({ label, children }) => (
  <>
    <div className="pl-[18px] text-[17px] leading-6 tracking-[-0.1px] text-[#323130]">{label}</div>
    <div className="mt-[8px] mb-[16px] ml-[6px] h-[52px] w-[255px] shrink-0 rounded border border-dashed border-[#c8c6c4] bg-white p-[3px]">
      <div className="flex h-[34px] items-center rounded-[3px] border border-[#c2c0be] bg-[#ebeae9] pr-[6px] pl-[6px] text-[17px] tracking-[-0.1px] text-[#323130]">
        {children}
        <Chev className="ml-auto text-[#3b3a39]" w={18} h={10} sw={1.400} />
        <svg className="ml-[9px]" width="13" height="13" viewBox="0 0 13 13" stroke="#252423" strokeWidth="1.400">
          <path d="M.5 .5L12.500 12.500M12.500 .5L.5 12.500" />
        </svg>
      </div>
    </div>
  </>
);

const Visualizations = () => (
  <aside className="flex w-[271px] shrink-0 flex-col overflow-hidden border-l border-[#d6d4d2] bg-[#f3f2f1]">
    <div className="flex h-[58px] shrink-0 items-center pr-[11px] pl-[12px] text-[22.500px] font-semibold tracking-[-0.1px] text-[#252423]">
      <span className="grow pt-[2px]">Visualizations</span>
      <Double />
    </div>
    <div className="h-[29px] shrink-0 pl-[12px] text-[16.500px] leading-[23px] font-semibold text-[#252423]">Build visual</div>
    <div className="flex h-[54px] shrink-0 pl-3">
      <div className="-mt-px flex h-12 w-12 items-center justify-center rounded-[3px] bg-[#d2d0ce]">
        <svg width="38" height="38" viewBox="0 0 38 38" fill="#117865" stroke="#252423" strokeWidth="2">
          <path d="M1 2H30" />
          <rect x="2" y="10" width="34" height="10" strokeDasharray="3 1.500" />
          <rect x="2" y="26" width="34" height="10" strokeDasharray="3 1.500" />
        </svg>
      </div>
      <svg className="mt-[5px] ml-[60px]" width="34" height="37" viewBox="0 0 34 37" fill="none" stroke="#252423" strokeWidth="1.600">
        <path d="M1 28V15H10V31M10 26V2H19V22M19 9H28V12" />
        <path d="M33 14Q27 17 18 27L21 30Q29 23 33 14ZM18 27Q13 25 12 31Q11 34 7 34Q15 38 20 33Q21 31 21 30" fill="#f3f2f1" />
      </svg>
      <svg className="mt-[5px] ml-[61px]" width="37" height="37" viewBox="0 0 37 37" fill="none" stroke="#252423" strokeWidth="1.600">
        <circle cx="16" cy="16" r="15" />
        <path d="M2 20L8 15L14 17L28 8M9 29V20M14 30V22M19 30V20M24 27V16" />
        <path d="M27 26L36 36" strokeWidth="3.500" />
      </svg>
    </div>
    <svg className="shrink-0" width="270" height="14" viewBox="0 0 270 14" fill="none" stroke="#8a8886" strokeWidth="1.300">
      <path d="M0 12H24L36 1L48 12H270" />
    </svg>
    <div className="grid shrink-0 auto-rows-[42px] grid-cols-[repeat(6,42px)] pt-[8px] pl-[9px]">
      {GALLERY.map((g, i) => (
        <div key={i} className={`flex items-center justify-center ${i === 28 ? "m-[3px] border border-[#252423]" : ""}`}>
          <svg width="28" height="28" viewBox="0 0 28 28" fill="none" stroke={INK} strokeWidth="1.700" className="shrink-0 overflow-visible">
            {g}
          </svg>
        </div>
      ))}
    </div>
    <div className="flex h-[48px] shrink-0 gap-[6px] pt-[16px] pl-[20px]">
      <i className="h-[3px] w-[3px] rounded-full bg-[#252423]" />
      <i className="h-[3px] w-[3px] rounded-full bg-[#252423]" />
      <i className="h-[3px] w-[3px] rounded-full bg-[#252423]" />
    </div>
    <div className="flex h-[198px] shrink-0 overflow-hidden border-t border-[#d6d4d2]">
      <div className="flex w-[261px] shrink-0 flex-col pt-[13px]">
        <Chip label="Rows">Category</Chip>
        <Chip label="Columns">Month</Chip>
      </div>
      <div className="mt-[3px] h-[105px] w-[9px] rounded-full bg-[#d2d0ce]" />
    </div>
  </aside>
);

const Table = ({ label, checked }) => (
  <div className="flex h-9 items-center pl-[24px] text-[17px] tracking-[-0.1px] text-[#323130]">
    <svg width="10" height="18" viewBox="0 0 10 18" fill="none" stroke="#3b3a39" strokeWidth="1.400">
      <path d="M1 1L9 9L1 17" />
    </svg>
    <div className="relative mr-[8px] ml-[10px]">
      <svg width="19" height="19" viewBox="0 0 19 19" fill="none" stroke="#252423" strokeWidth="1.500">
        <rect x="1" y="1" width="17" height="17" rx="3" />
        <path d="M1 6H18M1 13H18M6.500 1V18M12.500 1V18" />
      </svg>
      {checked && (
        <svg className="absolute top-[9px] left-[9px]" width="18" height="18" viewBox="0 0 18 18" fill="none">
          <circle cx="9" cy="9" r="9" fill="#117865" />
          <path d="M5.500 9L8 11.500L12.500 7" stroke="#fff" strokeWidth="1.700" />
        </svg>
      )}
    </div>
    {label}
  </div>
);

const Data = () => (
  <aside className="w-[270px] shrink-0 border-l border-[#d6d4d2] bg-[#f3f2f1]">
    <div className="flex h-[58px] items-center pr-[10px] pl-[12px] text-[22.500px] font-semibold text-[#252423]">
      <span className="grow pt-[2px]">Data</span>
      <Double />
    </div>
    <div className="mt-[10px] ml-[6px] flex h-[36px] w-[258px] items-center rounded-md border border-[#d2d0ce] border-b-[#605e5c] bg-white pl-[18px] text-[#706e6c]">
      <svg width="22" height="22" viewBox="0 0 22 22" fill="none" stroke="#605e5c" strokeWidth="1.500">
        <circle cx="9" cy="9" r="7.800" />
        <path d="M14.500 14.500L21 21" />
      </svg>
      <span className="ml-[10px] pt-[2px] text-[19.500px]">Search</span>
    </div>
    <div className="mt-[14px]">
      <Table label="Agents" />
      <Table label="SLA_definitions" />
      <Table label="Tickets" checked />
    </div>
  </aside>
);

const PageTabs = () => (
  <div className="flex h-[12px] shrink-0 bg-[#f3f2f1]">
    <div className="flex w-[192px] items-end border-r border-[#a19f9d] pl-[18px]">
      <div className="h-px w-[28px] bg-[#3b3a39]" />
      <div className="ml-[44px] h-[5px] w-[18px] rounded-t-sm border-2 border-b-0 border-[#3b3a39]" />
    </div>
    <div className="w-[113px] border-r border-[#c8c6c4] bg-white" />
    <div className="w-[59px] bg-[#117865]" />
  </div>
);

export default function App() {
  return (
    <div className="flex h-[902px] w-[1908px] flex-col overflow-hidden bg-white font-['Open_Sans','Noto_Sans',sans-serif]">
      <Header />
      <div className="flex min-h-0 flex-1">
        <Rail />
        <div className="flex w-[1317px] shrink-0 flex-col">
          <div className="flex h-[691px] shrink-0">
            <Report />
            <Filters />
          </div>
          <PageTabs />
        </div>
        <Visualizations />
        <Data />
      </div>
    </div>
  );
}
